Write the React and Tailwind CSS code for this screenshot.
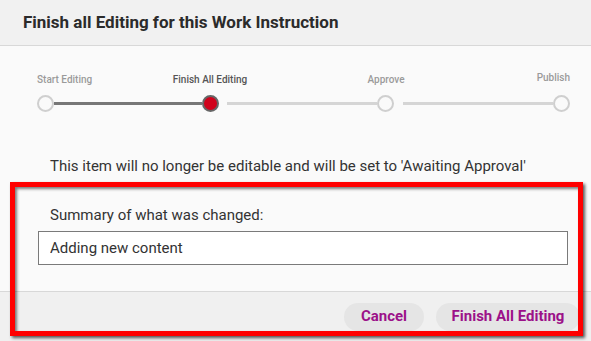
import React, { useState } from 'react';

function Circle({ active }) {
  if (active) {
    return <div className="w-[17px] h-[17px] shrink-0 rounded-full border-2 border-[#666666] bg-[#d0021b]" />;
  }
  return <div className="w-[17px] h-[17px] shrink-0 rounded-full border-2 border-[#cfcfcf] bg-[#fafafa]" />;
}

export default function App() {
  const [summary, setSummary] = useState('Adding new content');
  return (
    <div className="relative w-[591px] h-[341px] overflow-hidden bg-[#fafafa] text-[#333333] font-['Roboto',sans-serif]">
      <div className="h-[46px] bg-[#f1f1f1] border-b border-[#d8d8d8] flex items-center pl-[23px]">
        <h2 className="text-[17px] font-bold text-[#2b2b2b]">Finish all Editing for this Work Instruction</h2>
      </div>

      <div className="pl-[37px] pr-[21px] pt-[28px]">
        <div className="flex items-end text-[10px] font-medium leading-[12px] h-[12px]">
          <span className="w-[100px] text-left text-[#9a9a9a]">Start Editing</span>
          <span className="w-[146px] text-center text-[#555555]">Finish All Editing</span>
          <span className="w-[206px] text-center text-[#9a9a9a]">Approve</span>
          <span className="w-[81px] text-right text-[#9a9a9a] -translate-y-[2px]">Publish</span>
        </div>
        <div className="flex items-center mt-[9px]">
          <Circle />
          <div className="w-[148px] h-[3px] bg-[#777777]" />
          <Circle active />
          <div className="w-[150px] h-[3px] bg-[#d5d5d5] ml-[8px]" />
          <Circle />
          <div className="w-[150px] h-[3px] bg-[#d5d5d5] ml-[9px]" />
          <Circle />
        </div>
      </div>

      <p className="pl-[50px] mt-[45px] text-[15px] leading-[18px]">This item will no longer be editable and will be set to 'Awaiting Approval'</p>

      <div className="pl-[50px] mt-[31px] text-[15px] leading-[18px]">Summary of what was changed:</div>
      <div className="pl-[38px] pr-[23px] mt-[7px]">
        <input
          value={summary}
          onChange={e => setSummary(e.target.value)}
          className="w-full h-[34px] border border-[#7a7a7a] bg-white px-[11px] text-[15px] text-[#333333] outline-none"
        />
      </div>

      <div className="absolute left-0 right-0 bottom-0 h-[50px] bg-[#f0f0f0] border-t border-[#d8d8d8] flex items-center justify-end gap-[12px] pr-[11px]">
        <button className="h-[28px] w-[80px] rounded-full bg-[#e5e5e5] text-[15px] font-bold text-[#9c1189]">Cancel</button>
        <button className="h-[28px] w-[144px] rounded-full bg-[#e5e5e5] text-[15px] font-bold text-[#9c1189]">Finish All Editing</button>
      </div>

      <div className="absolute left-[10px] top-[182px] w-[573px] h-[154px] border-[5px] border-[#ff0000] pointer-events-none shadow-[2px_2px_3px_rgba(0,0,0,0.65),inset_2px_2px_3px_rgba(0,0,0,0.5)]" />
    </div>
  );
}
